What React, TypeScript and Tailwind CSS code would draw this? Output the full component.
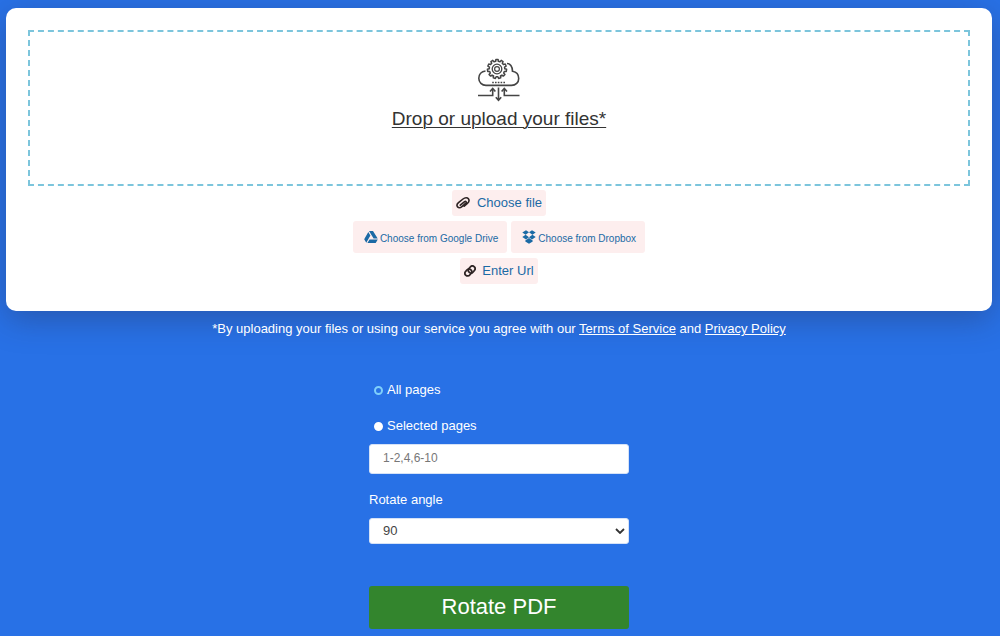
import { useState } from "react";

const angles = ["90", "180", "270"];

// closed gear outline: each tooth has two outer and two inner corners
function gearPath(cx: number, cy: number, outer: number, inner: number, teeth: number) {
  const points: string[] = [];
  for (let i = 0; i < teeth; i++) {
    const step = (Math.PI * 2) / teeth;
    const corners = [
      [inner, -0.3],
      [outer, -0.2],
      [outer, 0.2],
      [inner, 0.3],
    ];
    for (const [r, t] of corners) {
      const a = (i + t) * step - Math.PI / 2;
      points.push(`${(cx + r * Math.cos(a)).toFixed(2)} ${(cy + r * Math.sin(a)).toFixed(2)}`);
    }
  }
  return `M${points.join("L")}Z`;
}

function CloudGearIcon() {
  return (
    <svg
      viewBox="0 0 42 44"
      className="w-[42px] h-11"
      fill="none"
      stroke="#454545"
      strokeWidth="1.6"
      aria-hidden="true"
    >
      <path d="M7.500 13C3.500 13.500.8 16.500.8 20.200c0 4.200 3.200 7.200 7.200 7.200h25.500c4.300 0 7.200-3 7.200-7 0-3.800-2.600-6.600-6.200-7.200C34.500 8.500 32 5.500 29 5.500" />
      <path d={gearPath(19, 11, 9.6, 7.8, 11)} strokeWidth="1.500" strokeLinejoin="round" />
      <circle cx="19" cy="11" r="4.800" strokeWidth="1.300" />
      <circle cx="19" cy="11" r="2.400" strokeWidth="1.200" />
      <path d="M14.200 24.500h13" strokeWidth="1.400" strokeDasharray="1.600 1.200" />
      <path d="M0 37.500h14.700V31M41.500 37.500H26.300V31" />
      <path d="M12 33.500l2.700-3 2.700 3M23.600 33.500l2.700-3 2.700 3" />
      <path d="M20.500 29.500v12.500M17.800 39.300l2.700 3 2.700-3" />
    </svg>
  );
}

function ClipIcon() {
  return (
    <svg
      viewBox="0 0 14 14"
      className="w-3.5 h-3.5"
      fill="none"
      stroke="#2e2424"
      strokeWidth="1.600"
      strokeLinecap="round"
      aria-hidden="true"
    >
      <path d="M4.300 9.200L8.600 5.600c1.200-.9 2.200.5 1.200 1.500L6.200 10.300C4.500 11.800 2.600 12 1.600 10.900.6 9.700 1 8 2.500 6.700L7 3c2-1.700 4.300-1.700 5.400-.3 1 1.400.6 3.300-1 4.700L8.200 10.200" />
    </svg>
  );
}

function DriveIcon() {
  return (
    <svg viewBox="0 0 14 13" className="w-3.5 h-3.5" fill="#1b6aa5" aria-hidden="true">
      <path d="M5 .5h4L13.700 8H9.600zM4.300 1.500l2.100 3.600L2.300 12.200.2 8.700zM5.500 8.900h8.300l-2.100 3.600H3.400z" />
    </svg>
  );
}

function DropboxIcon() {
  return (
    <svg viewBox="0 0 14 14" className="w-3.5 h-3.5" fill="#1b6aa5" aria-hidden="true">
      <path d="M4 .2l3 2.100-3.400 2.400L.3 2.400zM10 .2l3.700 2.200-3.300 2.300L7 2.300zM3.600 4.800L7 7.200 4 9.400.3 7zM10.400 4.800L13.700 7 10 9.400 7 7.200zM7 8l3.700 2.500v1L7 13.800l-3.700-2.300v-1z" />
    </svg>
  );
}

function LinkIcon() {
  return (
    <svg
      viewBox="0 0 12 12"
      className="w-3 h-3"
      fill="none"
      stroke="#2e2424"
      strokeWidth="1.800"
      aria-hidden="true"
    >
      <rect x="4" y="1.800" width="7.400" height="5.400" rx="2.700" transform="rotate(-50 7.700 4.500)" />
      <rect x=".6" y="4.800" width="7.400" height="5.400" rx="2.700" transform="rotate(-50 4.300 7.500)" />
    </svg>
  );
}

export default function App() {
  const [mode, setMode] = useState("selected");
  const radio =
    "appearance-none w-[9px] h-[9px] rounded-full border-2 border-[#7fd0fb] checked:border-white checked:bg-white";

  return (
    <div className="min-h-screen bg-[#2871e6] pt-2 pl-1.5 pr-2 text-[13px] leading-5 text-white font-['Liberation_Sans',Arial,sans-serif]">
      <section className="flex flex-col items-center rounded-[10px] bg-white px-[22px] pt-[22px] pb-[27px] shadow-[0_8px_32px_rgba(40,50,90,0.4)]">
        <button
          type="button"
          className="flex h-[156px] w-full flex-col items-center border-2 border-dashed border-[#7cc5dc] pt-[26px]"
        >
          <CloudGearIcon />
          <span className="mt-[3px] text-[19px] leading-7 text-[#333] underline underline-offset-2 decoration-1">
            Drop or upload your files*
          </span>
        </button>
        <button
          type="button"
          className="mt-1 flex h-[26px] items-center gap-[7px] rounded-[3px] bg-[#fdeeee] px-1 text-[13px] text-[#1b6aa5]"
        >
          <ClipIcon />
          Choose file
        </button>
        <div className="mt-[5px] flex gap-1">
          <button
            type="button"
            className="flex h-8 items-center gap-0.5 rounded-[3px] bg-[#fdeeee] pl-[11px] pr-[9px] text-[10px] text-[#1b6aa5]"
          >
            <DriveIcon />
            <span className="pt-1">Choose from Google Drive</span>
          </button>
          <button
            type="button"
            className="flex h-8 items-center gap-0.5 rounded-[3px] bg-[#fdeeee] pl-[11px] pr-[9px] text-[10px] text-[#1b6aa5]"
          >
            <DropboxIcon />
            <span className="pt-1">Choose from Dropbox</span>
          </button>
        </div>
        <button
          type="button"
          className="mt-[5px] flex h-[26px] items-center gap-1.5 rounded-[3px] bg-[#fdeeee] px-1 text-[13px] text-[#1b6aa5]"
        >
          <LinkIcon />
          Enter Url
        </button>
      </section>

      <p className="mt-2 text-center">
        *By uploading your files or using our service you agree with our{" "}
        <a href="#terms" className="underline">
          Terms of Service
        </a>{" "}
        and{" "}
        <a href="#privacy" className="underline">
          Privacy Policy
        </a>
      </p>

      <form className="mx-auto mt-[41px] flex w-[260px] flex-col pb-1.5" onSubmit={(e) => e.preventDefault()}>
        <label className="flex items-center gap-1 pl-[5px]">
          <input
            type="radio"
            name="pages"
            className={radio}
            checked={mode === "all"}
            onChange={() => setMode("all")}
          />
          All pages
        </label>
        <label className="mt-4 flex items-center gap-1 pl-[5px]">
          <input
            type="radio"
            name="pages"
            className={radio}
            checked={mode === "selected"}
            onChange={() => setMode("selected")}
          />
          Selected pages
        </label>
        <input
          type="text"
          aria-label="Selected pages"
          placeholder="1-2,4,6-10"
          className="mt-2 h-[30px] rounded-[3px] border border-[#d5e2f7] bg-white px-[13px] pb-0.5 text-xs text-[#555] placeholder:text-[#777]"
        />
        <label htmlFor="angle" className="mt-4">
          Rotate angle
        </label>
        <div className="relative mt-2">
          <select
            id="angle"
            className="block h-[26px] w-full appearance-none rounded-[3px] border border-[#d5e2f7] bg-white px-[13px] text-[#444]"
          >
            {angles.map((a) => (
              <option key={a}>{a}</option>
            ))}
          </select>
          <svg
            viewBox="0 0 10 6"
            className="pointer-events-none absolute right-1 top-2.5 w-2.5 h-1.5"
            fill="none"
            stroke="#333"
            strokeWidth="1.800"
            aria-hidden="true"
          >
            <path d="M1 1l4 4 4-4" />
          </svg>
        </div>
        <button type="submit" className="mt-[42px] h-[43px] rounded-[3px] bg-[#33852d] pb-0.5 text-[22px]">
          Rotate PDF
        </button>
      </form>
    </div>
  );
}
